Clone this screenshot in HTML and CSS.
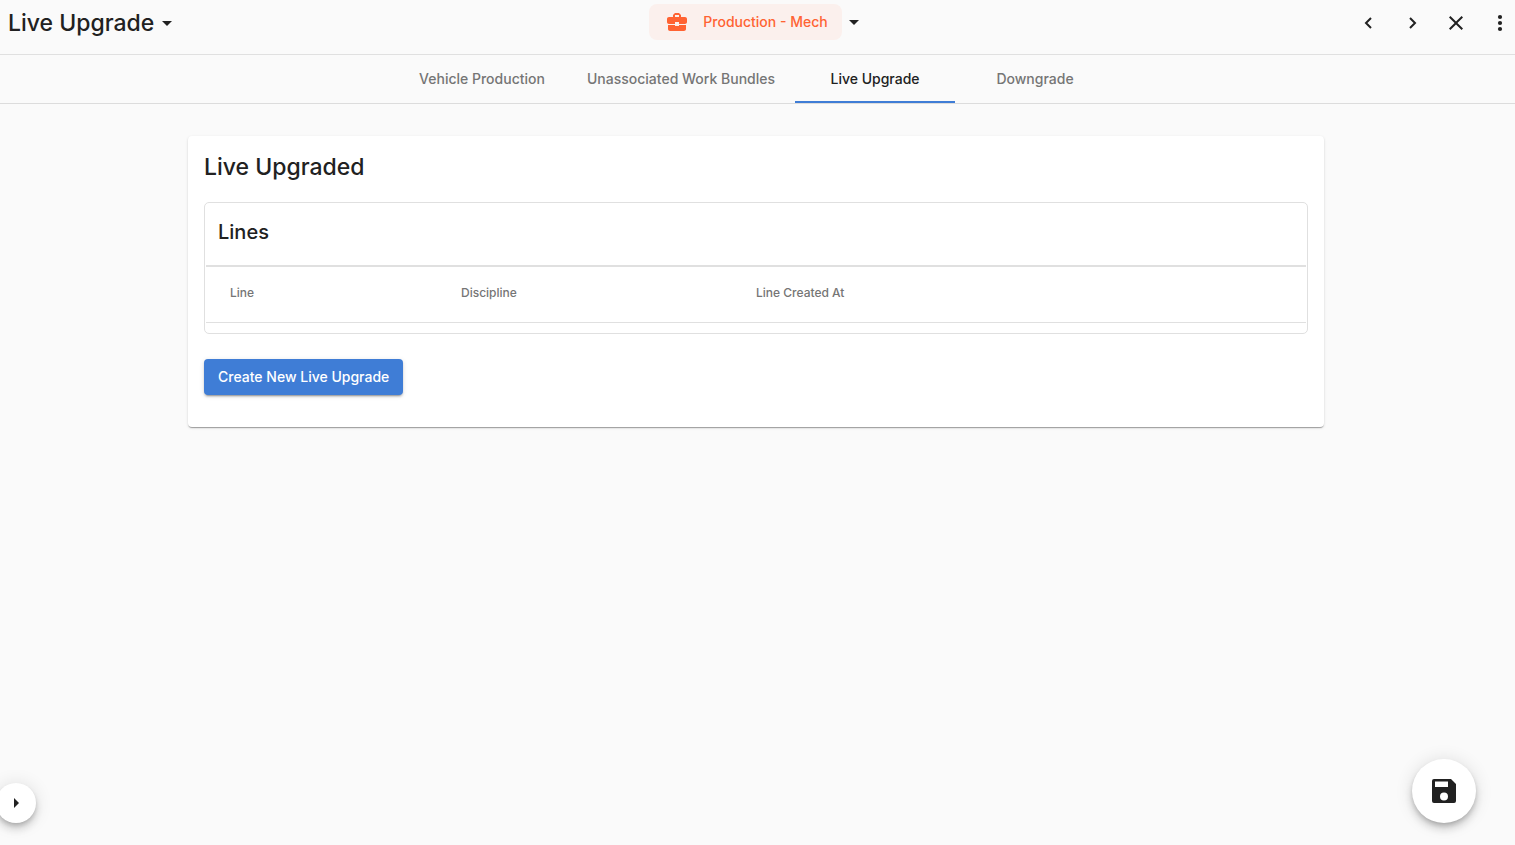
FILE: index.html
```html
<!DOCTYPE html>
<html lang="en">
<head>
<meta charset="utf-8">
<meta name="viewport" content="width=device-width, initial-scale=1">
<title>Live Upgrade</title>
<link rel="stylesheet" href="styles.css">
</head>
<body>
<header class="topbar">
  <button class="page-title" type="button">Live Upgrade
    <svg class="caret" viewBox="0 0 10 5" aria-hidden="true"><path d="M0 0h10L5 5z"/></svg>
  </button>
  <div class="workspace">
    <button class="chip" type="button">
      <svg class="icon" viewBox="0 0 24 24" aria-hidden="true"><path d="M10 16v-1H3.010L3 19c0 1.110.89 2 2 2h14c1.110 0 2-.89 2-2v-4h-7v1h-4zm10-9h-4.010V5l-2-2h-4l-2 2v2H4c-1.100 0-2 .9-2 2v3c0 1.110.89 2 2 2h6v-2h4v2h6c1.100 0 2-.9 2-2V9c0-1.100-.9-2-2-2zm-6 0h-4V5h4v2z"/></svg>
      Production - Mech
    </button>
    <button class="chip-menu" type="button" aria-label="Change workspace">
      <svg class="caret" viewBox="0 0 10 5" aria-hidden="true"><path d="M0 0h10L5 5z"/></svg>
    </button>
  </div>
  <div class="actions">
    <button type="button" aria-label="Previous"><svg class="icon" viewBox="0 0 24 24"><path class="stroke" d="M15 7l-5 5 5 5"/></svg></button>
    <button type="button" aria-label="Next"><svg class="icon" viewBox="0 0 24 24"><path class="stroke" d="M10 7l5 5-5 5"/></svg></button>
    <button type="button" aria-label="Close"><svg class="icon" viewBox="0 0 24 24"><path d="M19 6.410L17.590 5 12 10.590 6.410 5 5 6.410 10.590 12 5 17.590 6.410 19 12 13.410 17.590 19 19 17.590 13.410 12z"/></svg></button>
    <button type="button" aria-label="More options"><svg class="icon" viewBox="0 0 24 24"><circle cx="12" cy="6" r="2.100"/><circle cx="12" cy="12" r="2.100"/><circle cx="12" cy="18" r="2.100"/></svg></button>
  </div>
</header>
<nav class="tabs">
  <a class="tab" href="#vehicle">Vehicle Production</a>
  <a class="tab" href="#bundles">Unassociated Work Bundles</a>
  <a class="tab active" href="#upgrade" aria-current="page">Live Upgrade</a>
  <a class="tab" href="#downgrade">Downgrade</a>
</nav>
<main class="content">
  <section class="card">
    <h1>Live Upgraded</h1>
    <div class="panel">
      <h2>Lines</h2>
      <table class="lines">
        <colgroup><col class="col-line"><col class="col-discipline"><col></colgroup>
        <thead><tr><th scope="col">Line</th><th scope="col">Discipline</th><th scope="col">Line Created At</th></tr></thead>
      </table>
    </div>
    <button class="primary" type="button">Create New Live Upgrade</button>
  </section>
</main>
<button class="expand" type="button" aria-label="Expand sidebar"><svg viewBox="0 0 5 10"><path d="M0 0l5 5-5 5z"/></svg></button>
<button class="save" type="button" aria-label="Save"><svg viewBox="0 0 24 24"><path fill-rule="evenodd" d="M2 0h17l5 5v17a2 2 0 0 1-2 2H2a2 2 0 0 1-2-2V2a2 2 0 0 1 2-2zM3 2.500V8h13V2.500zM12 13.500a4 4 0 1 0 0 8 4 4 0 0 0 0-8z"/></svg></button>
</body>
</html>
```
FILE: styles.css
```css
* { box-sizing: border-box; }

body {
  margin: 0;
  min-height: 100vh;
  background: #fafafa;
  color: #212121;
  font: 500 14px/20px Inter, "Liberation Sans", sans-serif;
}

button {
  margin: 0;
  padding: 0;
  border: 0;
  background: none;
  color: inherit;
  font: inherit;
  cursor: pointer;
}

svg { display: block; fill: currentColor; }
.icon { width: 24px; height: 24px; }
.caret { width: 10px; height: 5px; }
.stroke { fill: none; stroke: currentColor; stroke-width: 2; }

.topbar {
  display: grid;
  grid-template-columns: 1fr auto 1fr;
  padding-bottom: 8px;
  border-bottom: 1px solid #e0e0e0;
}

.page-title {
  display: flex;
  align-items: center;
  justify-self: start;
  gap: 8px;
  height: 46px;
  padding-left: 8px;
  font-size: 23px;
  line-height: 32px;
}

.workspace { display: flex; align-items: center; height: 44px; }

.chip {
  display: flex;
  align-items: center;
  gap: 14px;
  height: 36px;
  padding: 0 14px 0 16px;
  border-radius: 8px;
  background: #fbf0ed;
  color: #ff6333;
}

.chip-menu { display: flex; justify-content: center; width: 24px; padding: 8px 0; }

.actions { display: flex; justify-content: flex-end; align-items: center; gap: 14px; height: 46px; }
.actions button { display: flex; justify-content: center; width: 30px; }

.tabs {
  display: grid;
  grid-template-columns: 170px 228px 160px 160px;
  justify-content: center;
  height: 49px;
  padding-right: 3px;
  border-bottom: 1px solid #dcdcdc;
}

.tab {
  display: flex;
  align-items: center;
  justify-content: center;
  padding-top: 2px;
  border-bottom: 2px solid transparent;
  color: #757575;
  text-decoration: none;
}
.tab.active { border-color: #3f7dd6; color: #212121; }

.content { padding: 32px 3px 32px 0; }

.card {
  width: calc(75% + 2px);
  min-height: 291px;
  margin: 0 auto;
  padding: 15px 16px 32px;
  border-radius: 4px;
  background: #fff;
  box-shadow: 0 2px 1px -1px rgba(0,0,0,.2), 0 1px 1px rgba(0,0,0,.14), 0 1px 3px rgba(0,0,0,.12);
}

h1 { margin: 0 0 19px; font-size: 23px; line-height: 32px; font-weight: 500; }

.panel { padding: 0 1px 10px; border: 1px solid #e0e0e0; border-radius: 5px; }

h2 { margin: 0; padding: 15px 12px 19px; font-size: 20px; line-height: 28px; font-weight: 500; }

.lines {
  width: 100%;
  table-layout: fixed;
  border-collapse: separate;
  border-spacing: 0;
  border-top: 2px solid #e0e0e0;
}
.col-line { width: 231px; }
.col-discipline { width: 295px; }
.lines th {
  height: 56px;
  padding: 0 24px 4px;
  border-bottom: 1px solid #e0e0e0;
  color: #757575;
  font-size: 12px;
  font-weight: 500;
  text-align: left;
}

.primary {
  display: block;
  height: 36px;
  margin-top: 25px;
  padding: 0 14px;
  border-radius: 4px;
  background: #3f7dd6;
  color: #fff;
  box-shadow: 0 3px 1px -2px rgba(0,0,0,.2), 0 2px 2px rgba(0,0,0,.14), 0 1px 5px rgba(0,0,0,.12);
}

.expand, .save {
  position: fixed;
  display: flex;
  align-items: center;
  justify-content: center;
  border-radius: 50%;
  background: #fff;
  box-shadow: 0 3px 5px -1px rgba(0,0,0,.2), 0 6px 10px rgba(0,0,0,.14), 0 1px 18px rgba(0,0,0,.12);
}
.expand { left: -4px; bottom: 22px; width: 40px; height: 40px; }
.expand svg { width: 5px; height: 10px; }
.save { right: 39px; bottom: 22px; width: 64px; height: 64px; }
.save svg { width: 24px; height: 24px; }
```
